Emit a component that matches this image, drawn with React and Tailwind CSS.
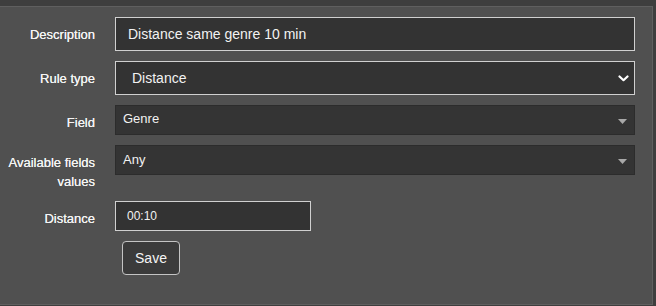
import React from "react";

function Label({ children }) {
  return (
    <div className="w-[87px] shrink-0 text-right text-[13px] leading-[19px] pt-[8px] text-[#f4f4f4] [text-shadow:0_0_0.4px_#f4f4f4]">
      {children}
    </div>
  );
}

function Row({ label, children }) {
  return (
    <div className="flex items-start">
      <Label>{label}</Label>
      <div className="ml-[20px]">{children}</div>
    </div>
  );
}

function Tri() {
  return (
    <svg width="9" height="5" viewBox="0 0 9 5" className="shrink-0">
      <path d="M0 0 L9 0 L4.5 5 Z" fill="#a8a8a8" />
    </svg>
  );
}

export default function App() {
  return (
    <div
      className="w-[656px] h-[306px] bg-[#3e3e3e] pt-[6px] pr-[3px] overflow-hidden"
      style={{ fontFamily: '"Liberation Sans", Arial, sans-serif' }}
    >
      <div className="h-[299px] bg-[#505050] border-t border-r border-b border-[#5f5f5f]">
        <div className="flex flex-col gap-[10px] pt-[10px] pl-[8px]">
          <Row label="Description">
            <div className="w-[520px] h-[34px] border border-[#d0d0d0] bg-[#333333] pl-[12px] flex items-center text-[14px] text-[#f2f2f2]">
              Distance same genre 10 min
            </div>
          </Row>
          <Row label="Rule type">
            <div className="w-[520px] h-[34px] border border-[#d0d0d0] bg-[#333333] pl-[16px] pr-[5px] flex items-center justify-between text-[14px] text-[#f2f2f2]">
              <span>Distance</span>
              <svg width="11" height="7" viewBox="0 0 11 7">
                <path d="M1.5 1.5 L5.5 5.2 L9.5 1.5" fill="none" stroke="#ffffff" strokeWidth="2.2" strokeLinecap="round" strokeLinejoin="round" />
              </svg>
            </div>
          </Row>
          <Row label="Field">
            <div className="w-[520px] h-[30px] border border-[#2c2c2c] bg-[#343434] pl-[7px] pr-[7px] flex items-start justify-between text-[13px] text-[#f2f2f2]">
              <span className="pt-[4px] leading-[17px]">Genre</span>
              <span className="pt-[13px]"><Tri /></span>
            </div>
          </Row>
          <Row label={<>Available fields<br />values</>}>
            <div className="w-[520px] h-[30px] border border-[#2c2c2c] bg-[#343434] pl-[7px] pr-[7px] flex items-start justify-between text-[13px] text-[#f2f2f2]">
              <span className="pt-[5px] leading-[17px]">Any</span>
              <span className="pt-[13px]"><Tri /></span>
            </div>
          </Row>
          <Row label="Distance">
            <div className="w-[196px] h-[30px] border border-[#d0d0d0] bg-[#333333] pl-[11px] flex items-center text-[12px] text-[#f2f2f2]">
              00:10
            </div>
          </Row>
          <div className="ml-[114px]">
            <div className="w-[58px] h-[34px] rounded-[4px] border border-[#c4c4c4] bg-[#3b3b3b] flex items-center justify-center text-[14px] text-[#f4f4f4]">
              Save
            </div>
          </div>
        </div>
      </div>
    </div>
  );
}
